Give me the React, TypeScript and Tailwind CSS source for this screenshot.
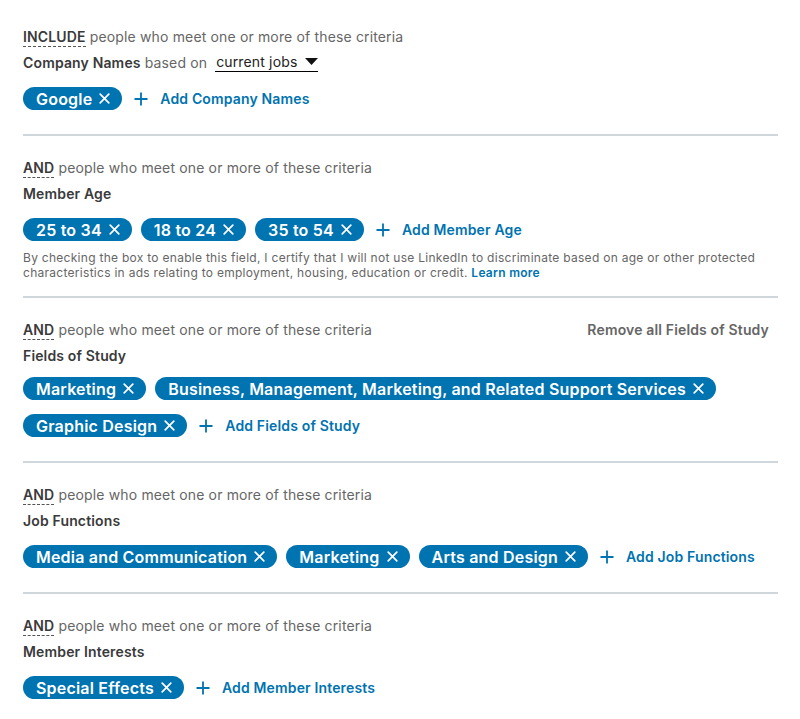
import React from 'react';

type Section = {
  lead: string;
  label: string;
  pills: string[];
  add: string;
  remove?: string;
  dropdown?: boolean;
  disclaimer?: boolean;
};

const SECTIONS: Section[] = [
  { lead: 'INCLUDE', label: 'Company Names', pills: ['Google'], add: 'Add Company Names', dropdown: true },
  { lead: 'AND', label: 'Member Age', pills: ['25 to 34', '18 to 24', '35 to 54'], add: 'Add Member Age', disclaimer: true },
  {
    lead: 'AND',
    label: 'Fields of Study',
    pills: ['Marketing', 'Business, Management, Marketing, and Related Support Services', 'Graphic Design'],
    add: 'Add Fields of Study',
    remove: 'Remove all Fields of Study',
  },
  { lead: 'AND', label: 'Job Functions', pills: ['Media and Communication', 'Marketing', 'Arts and Design'], add: 'Add Job Functions' },
  { lead: 'AND', label: 'Member Interests', pills: ['Special Effects'], add: 'Add Member Interests' },
];

const CloseIcon = () => (
  <svg width="11" height="11" viewBox="0 0 11 11" fill="none" stroke="currentColor" strokeWidth="1.7" strokeLinecap="round">
    <path d="M1.2 1.2l8.6 8.6M9.8 1.2l-8.6 8.6" />
  </svg>
);

const PlusIcon = () => (
  <svg width="14" height="14" viewBox="0 0 14 14" fill="none" stroke="currentColor" strokeWidth="1.8">
    <path d="M7 0.5v13M0.5 7h13" />
  </svg>
);

const Pill: React.FC<{ text: string }> = ({ text }) => (
  <span className="inline-flex items-center gap-[7px] h-[23px] pl-[13px] pr-[12px] rounded-full bg-[#0073b1] text-white text-[16px] font-semibold tracking-[0.2px] whitespace-nowrap">
    {text}
    <CloseIcon />
  </span>
);

const CriteriaSection: React.FC<{ s: Section }> = ({ s }) => (
  <div className="flex flex-col tracking-[0.15px]">
    <div className="flex items-center justify-between h-5 text-[14px]">
      <div>
        <span className="font-semibold text-[#3a3a3a] border-b border-dashed border-[#555] pb-[1px]">{s.lead}</span>
        <span className="text-[#666]"> people who meet one or more of these criteria</span>
      </div>
      {s.remove && <span className="font-semibold text-[#666] pr-[9px]">{s.remove}</span>}
    </div>
    <div className="flex items-center h-5 mt-1.5 text-[14px]">
      <span className="font-semibold text-[#3a3a3a]">{s.label}</span>
      {s.dropdown && (
        <>
          <span className="text-[#666] ml-1">based on</span>
          <span className="ml-2 flex items-center gap-2 border-b border-black text-[14px] text-[#222] leading-[19px] pl-[1px]">
            current jobs
            <svg width="13" height="7" viewBox="0 0 13 7" fill="#111">
              <path d="M0 0h13L6.5 7z" />
            </svg>
          </span>
        </>
      )}
    </div>
    <div
      className={`flex flex-wrap items-center gap-x-[9px] gap-y-[14px] ${
        s.dropdown ? 'mt-[15px]' : s.remove ? 'mt-[12px]' : 'mt-[15px]'
      }`}
    >
      {s.pills.map((p, i) => (
        <Pill key={i} text={p} />
      ))}
      <span className="flex items-center gap-3 ml-[3px] text-[#0073b1] text-[14px] font-semibold">
        <PlusIcon />
        {s.add}
      </span>
    </div>
    {s.disclaimer && (
      <p className="mt-[9px] -mb-2 text-[12px] leading-[15px] tracking-[0.28px] text-[#666]">
        By checking the box to enable this field, I certify that I will not use LinkedIn to discriminate based on age or other protected
        characteristics in ads relating to employment, housing, education or credit.{' '}
        <span className="font-semibold text-[#0073b1]">Learn more</span>
      </p>
    )}
  </div>
);

export default function App() {
  return (
    <div className="bg-white w-[800px] h-[719px] overflow-hidden pt-[26px] pl-[23px] pr-[22px] font-['Inter','Liberation_Sans',Arial,sans-serif]">
      {SECTIONS.map((s, i) => (
        <React.Fragment key={i}>
          {i > 0 && <div className="h-[2px] bg-[#cfd6dc] mt-[24px] mb-[21px]" />}
          <CriteriaSection s={s} />
        </React.Fragment>
      ))}
    </div>
  );
}
